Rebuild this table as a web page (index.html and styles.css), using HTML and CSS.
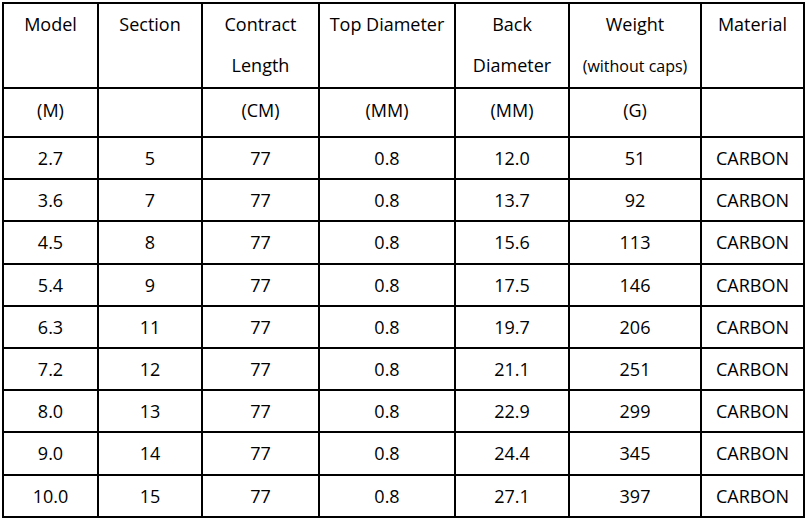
FILE: index.html
```html
<!DOCTYPE html>
<html>
<head>
<meta charset="utf-8">
<link rel="stylesheet" href="styles.css">
</head>
<body>
<table class="spec">
  <colgroup>
    <col class="c1"><col class="c2"><col class="c3"><col class="c4"><col class="c5"><col class="c6"><col class="c7">
  </colgroup>
  <tr class="head">
    <td>Model</td>
    <td>Section</td>
    <td>Contract<br>Length</td>
    <td>Top Diameter</td>
    <td>Back<br>Diameter</td>
    <td>Weight<br><span class="small">(without caps)</span></td>
    <td>Material</td>
  </tr>
  <tr class="units">
    <td>(M)</td><td></td><td>(CM)</td><td>(MM)</td><td>(MM)</td><td>(G)</td><td></td>
  </tr>
  <tr class="row"><td>2.7</td><td>5</td><td>77</td><td>0.8</td><td>12.0</td><td>51</td><td>CARBON</td></tr>
  <tr class="row"><td>3.6</td><td>7</td><td>77</td><td>0.8</td><td>13.7</td><td>92</td><td>CARBON</td></tr>
  <tr class="row"><td>4.5</td><td>8</td><td>77</td><td>0.8</td><td>15.6</td><td>113</td><td>CARBON</td></tr>
  <tr class="row"><td>5.4</td><td>9</td><td>77</td><td>0.8</td><td>17.5</td><td>146</td><td>CARBON</td></tr>
  <tr class="row"><td>6.3</td><td>11</td><td>77</td><td>0.8</td><td>19.7</td><td>206</td><td>CARBON</td></tr>
  <tr class="row"><td>7.2</td><td>12</td><td>77</td><td>0.8</td><td>21.1</td><td>251</td><td>CARBON</td></tr>
  <tr class="row"><td>8.0</td><td>13</td><td>77</td><td>0.8</td><td>22.9</td><td>299</td><td>CARBON</td></tr>
  <tr class="row"><td>9.0</td><td>14</td><td>77</td><td>0.8</td><td>24.4</td><td>345</td><td>CARBON</td></tr>
  <tr class="row"><td>10.0</td><td>15</td><td>77</td><td>0.8</td><td>27.1</td><td>397</td><td>CARBON</td></tr>
</table>
</body>
</html>
```
FILE: styles.css
```css
html, body {
  margin: 0;
  padding: 0;
  background: #fff;
}
body {
  padding: 2px 0 0 2px;
  font-family: "Open Sans", "Liberation Sans", sans-serif;
  color: #000;
}
.spec {
  border-collapse: collapse;
  table-layout: fixed;
  width: 803px;
  font-size: 18px;
}
.c1 { width: 95px; }
.c2 { width: 104px; }
.c3 { width: 117px; }
.c4 { width: 136px; }
.c5 { width: 114px; }
.c6 { width: 132px; }
.c7 { width: 103px; }
.spec td {
  border: 2px solid #000;
  text-align: center;
  padding: 0;
  white-space: nowrap;
}
.head td {
  height: 82px;
  vertical-align: top;
  line-height: 41px;
}
.units td {
  height: 47px;
  vertical-align: top;
  line-height: 42px;
}
.row td {
  height: 40.2px;
  vertical-align: middle;
  line-height: 20px;
}
.small {
  font-size: 16px;
}
```
